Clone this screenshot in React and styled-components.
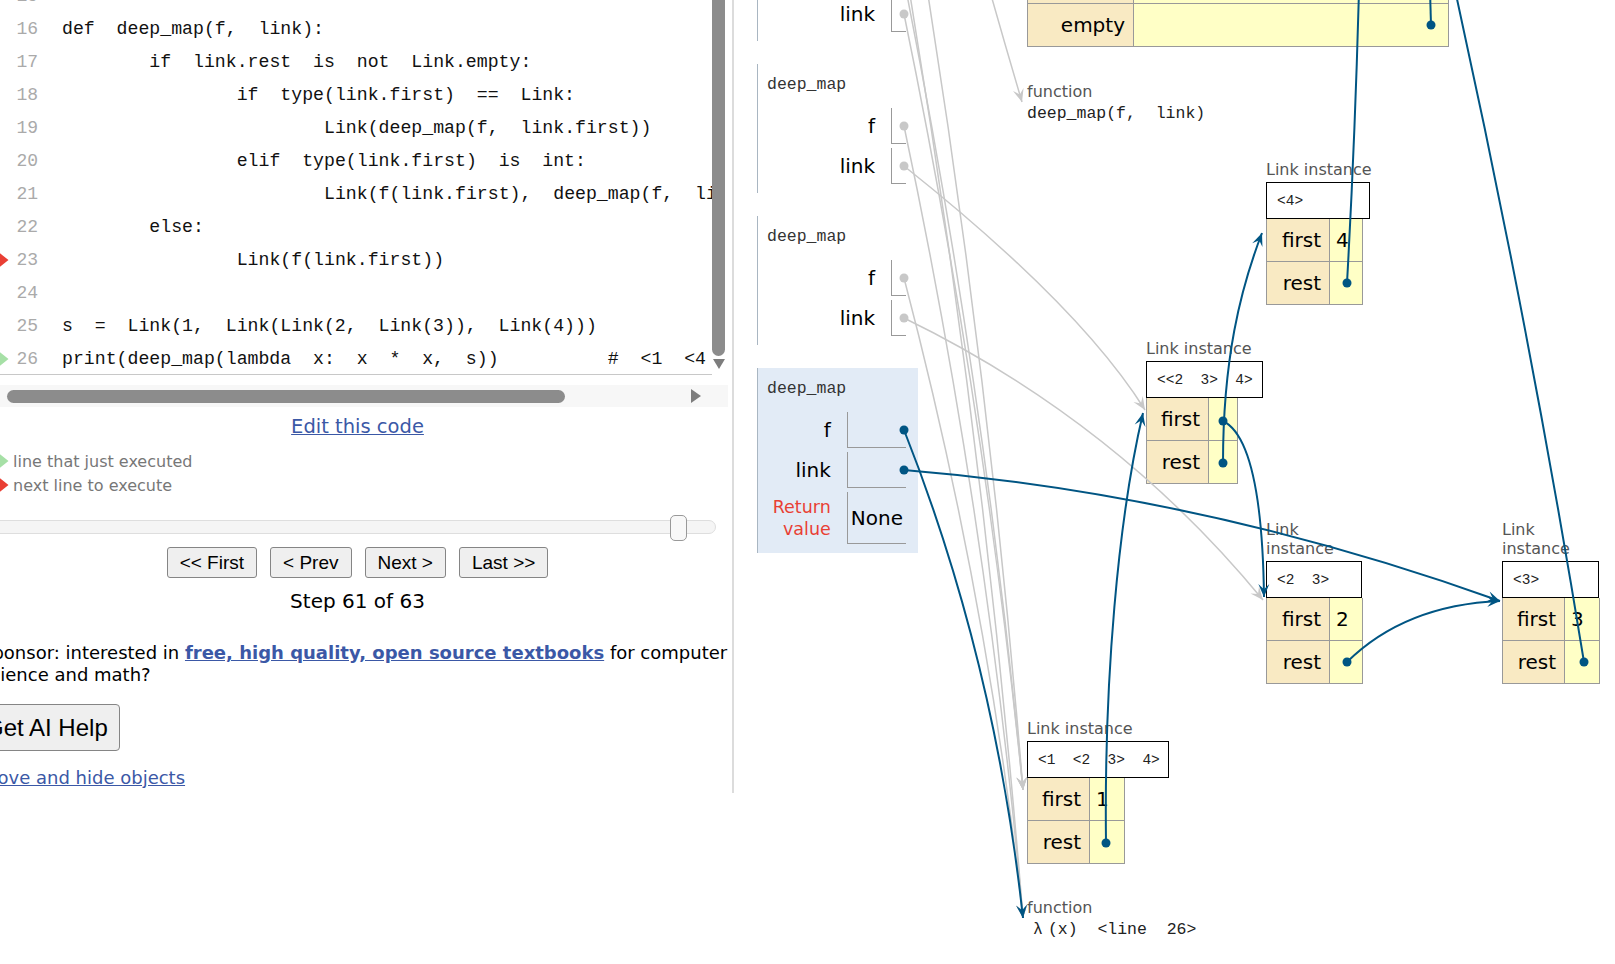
import React from "react";
import styled, { createGlobalStyle } from "styled-components";

const MONO = `"Liberation Mono", "DejaVu Sans Mono", monospace`;
const SANS = `"DejaVu Sans", Verdana, sans-serif`;
const ARIAL = `"Liberation Sans", Arial, sans-serif`;
const GRAY = "#c8c8c8";
const BLUE = "#005583";
const LINKBLUE = "#3b58a6";

const GlobalStyle = createGlobalStyle`
  html, body { margin: 0; padding: 0; background: #fff; }
  body { width: 1615px; height: 964px; overflow: hidden; font-family: ${SANS}; }
`;

const Page = styled.div`
  position: relative;
  display: flex;
  align-items: flex-start;
  width: 1615px;
  height: 964px;
  overflow: hidden;
`;

/* ---------- left pane ---------- */

const LeftPane = styled.div`
  flex: none;
  width: 749px;
  margin-left: -17px;
  padding-bottom: 3px;
  border-right: 2px solid #dcdcdc;
`;

const CodeRow = styled.div`
  display: flex;
  height: 396px;
  margin-top: -21px;
`;

const CodeScroll = styled.div`
  width: 729px;
  flex: none;
  overflow: hidden;
  box-sizing: border-box;
  border-bottom: 1px solid #c8c8c8;
`;

const CodeLine = styled.div`
  display: flex;
  align-items: center;
  height: 33px;
`;

const Gutter = styled.div`
  width: 26px;
  flex: none;
  display: flex;
  align-items: center;
`;

const LineNo = styled.div`
  width: 31px;
  flex: none;
  text-align: right;
  padding-right: 2px;
  box-sizing: border-box;
  font: 18px ${MONO};
  color: #aaa;
`;

const CodeText = styled.div`
  padding-left: 22px;
  font: 18.2px ${MONO};
  word-spacing: 0.6em;
  white-space: pre;
  color: #111;
`;

const VScroll = styled.div`
  width: 13px;
  flex: none;
  display: flex;
  flex-direction: column;
  align-items: center;
`;

const VThumb = styled.div`
  width: 13px;
  height: 377px;
  border-radius: 0 0 7px 7px;
  background: #8c8c8c;
`;

const DownArrow = styled.div`
  margin-top: 3px;
  width: 0;
  height: 0;
  border-left: 6px solid transparent;
  border-right: 6px solid transparent;
  border-top: 10px solid #7d7d7d;
`;

const HScroll = styled.div`
  margin-top: 10px;
  width: 745px;
  height: 22px;
  background: #f7f7f7;
  display: flex;
  align-items: center;
`;

const HThumb = styled.div`
  margin-left: 24px;
  width: 558px;
  height: 13px;
  border-radius: 7px;
  background: #8c8c8c;
`;

const RightArrow = styled.div`
  margin-left: auto;
  margin-right: 27px;
  width: 0;
  height: 0;
  border-top: 7px solid transparent;
  border-bottom: 7px solid transparent;
  border-left: 10px solid #7d7d7d;
`;

const Centered = styled.div`
  text-align: center;
  margin-top: ${(p) => p.$mt}px;
`;

const EditLink = styled.a`
  font: 19.5px/24px ${SANS};
  color: ${LINKBLUE};
  text-decoration: underline;
`;

const Legend = styled.div`
  margin-top: 10px;
`;

const LegendRow = styled.div`
  display: flex;
  align-items: center;
  height: 24px;
  font: 16px ${SANS};
  color: #777;
  gap: 4px;
`;

const SliderWrap = styled.div`
  position: relative;
  margin-top: 18px;
  height: 26px;
`;

const SliderTrack = styled.div`
  position: absolute;
  left: 0;
  top: 5px;
  width: 733px;
  height: 14px;
  box-sizing: border-box;
  border: 1px solid #dedede;
  border-radius: 7px;
  background: #f5f5f5;
`;

const SliderThumb = styled.div`
  position: absolute;
  top: 0;
  width: 17px;
  height: 26px;
  box-sizing: border-box;
  border: 1px solid #999;
  border-radius: 5px;
  background: #f8f8f8;
`;

const NavRow = styled.div`
  margin-top: 6px;
  display: flex;
  justify-content: center;
  gap: 13px;
`;

const NavButton = styled.button`
  height: 31px;
  padding: 0 12px;
  font: 19px ${ARIAL};
  color: #000;
  background: #efefef;
  border: 1px solid #858585;
  border-radius: 3px;
`;

const StepText = styled.div`
  margin-top: 10px;
  text-align: center;
  font: 20px/26px ${SANS};
  color: #000;
`;

const Sponsor = styled.p`
  margin: 28px 0 0 -2px;
  width: 790px;
  font: 18px/22px ${SANS};
  color: #000;

  a {
    color: ${LINKBLUE};
    font-weight: bold;
    text-decoration: underline;
  }
`;

const HelpButton = styled.button`
  display: block;
  margin: 18px 0 0 -10px;
  height: 47px;
  padding: 0 11px;
  font: 24px ${ARIAL};
  color: #000;
  background: #efefef;
  border: 1px solid #858585;
  border-radius: 4px;
`;

const MoveLink = styled.a`
  display: block;
  margin: 15px 0 0 -1px;
  font: 18px/24px ${SANS};
  color: ${LINKBLUE};
  text-decoration: underline;
`;

const Arrow = ({ color, w = 26, h = 20 }) => (
  <svg width={w} height={h} viewBox="0 0 26 20">
    <polygon points="0,7 14,7 14,1 25.5,10 14,19 14,13 0,13" fill={color} />
  </svg>
);

const code = [
  [15, ""],
  [16, "def deep_map(f, link):"],
  [17, "    if link.rest is not Link.empty:"],
  [18, "        if type(link.first) == Link:"],
  [19, "            Link(deep_map(f, link.first))"],
  [20, "        elif type(link.first) is int:"],
  [21, "            Link(f(link.first), deep_map(f, link.rest))"],
  [22, "    else:"],
  [23, "        Link(f(link.first))"],
  [24, ""],
  [25, "s = Link(1, Link(Link(2, Link(3)), Link(4)))"],
  [26, "print(deep_map(lambda x: x * x, s))     # <1 <4 <9> 16>>"],
];

const marks = { 23: "#e93f34", 26: "#a6e0a6" };

/* ---------- right pane ---------- */

const RightPane = styled.div`
  position: relative;
  flex: 1;
  height: 964px;
`;

const FrameColumn = styled.div`
  margin-top: -88px;
  padding-left: 23px;
  display: flex;
  flex-direction: column;
  gap: 23px;
`;

const Frame = styled.div`
  width: 161px;
  box-sizing: border-box;
  padding: 8px 12px 9px 9px;
  border-left: 1px solid #a9b6c2;
  background: ${(p) => (p.$active ? "#e2ebf6" : "transparent")};
`;

const FrameName = styled.div`
  font: 16.5px/26px ${MONO};
  color: #333;
  margin-bottom: 10px;
`;

const VarGrid = styled.div`
  display: grid;
  grid-template-columns: 1fr auto;
  row-gap: 4px;
`;

const VarName = styled.div`
  text-align: right;
  padding-right: 16px;
  font: 20px/36px ${SANS};
  color: #000;
`;

const RetName = styled.div`
  text-align: right;
  padding: 4px 16px 4px 0;
  font: 17.5px/22px ${SANS};
  color: #e93f34;
`;

const VarVal = styled.div`
  min-width: 15px;
  box-sizing: border-box;
  border-left: 1px solid #999;
  border-bottom: 1px solid #999;
  padding: 0 3px;
  font: 20px ${SANS};
  color: #000;
  display: flex;
  align-items: center;
`;

const HeapObj = styled.div`
  position: absolute;
  left: ${(p) => p.$x}px;
  top: ${(p) => p.$y}px;
`;

const TypeLabel = styled.div`
  width: ${(p) => p.$w}px;
  font: 16px/19px ${SANS};
  color: #555;
  margin-bottom: 3px;
  white-space: ${(p) => (p.$wrap ? "normal" : "nowrap")};
`;

const Header = styled.div`
  width: ${(p) => p.$w}px;
  height: 37px;
  box-sizing: border-box;
  border: 1px solid #000;
  background: #fff;
  display: flex;
  align-items: center;
  padding-left: 10px;
  font: 14.5px ${MONO};
  word-spacing: 0.6em;
  white-space: pre;
  color: #222;
`;

const Fields = styled.div`
  display: grid;
  grid-template-columns: ${(p) => p.$lab}px ${(p) => p.$val}px;
  grid-auto-rows: 43px;
  border-left: 1px solid #999;
`;

const FieldName = styled.div`
  box-sizing: border-box;
  border-right: 1px solid #999;
  border-bottom: 1px solid #999;
  background: #f9eac3;
  display: flex;
  align-items: center;
  justify-content: flex-end;
  padding-right: 8px;
  font: 20px ${SANS};
  color: #000;
`;

const FieldVal = styled.div`
  box-sizing: border-box;
  border-right: 1px solid #999;
  border-bottom: 1px solid #999;
  background: #ffffc6;
  display: flex;
  align-items: center;
  padding-left: 6px;
  font: 20px ${SANS};
  color: #000;
`;

const FuncKind = styled.div`
  font: 16px/19px ${SANS};
  color: #555;
`;

const FuncSig = styled.div`
  font: 16.5px/26px ${MONO};
  word-spacing: 0.6em;
  white-space: pre;
  color: #222;
  padding-left: ${(p) => p.$indent || 0}px;
`;

const Lambda = styled.span`
  margin-right: 5px;
`;

const Overlay = styled.svg`
  position: absolute;
  left: 0;
  top: 0;
  width: 1615px;
  height: 964px;
  pointer-events: none;
  overflow: visible;
`;

const frames = [
  { rows: ["f", "link"] },
  { rows: ["f", "link"] },
  { rows: ["f", "link"] },
  { rows: ["f", "link"], active: true, ret: "None" },
];

const links = [
  { x: 532, y: 160, repr: "<4>", head: 104, lab: 63, val: 33, first: "4" },
  { x: 412, y: 339, repr: "<<2 3> 4>", head: 117, lab: 62, val: 29, first: "" },
  { x: 532, y: 520, repr: "<2 3>", head: 96, lab: 63, val: 33, first: "2", wrap: true },
  { x: 768, y: 520, repr: "<3>", head: 97, lab: 62, val: 35, first: "3", wrap: true },
  { x: 293, y: 719, repr: "<1 <2 3> 4>", head: 142, lab: 62, val: 35, first: "1" },
];

const quad = (p0, c, p2, color) => ({
  d: `M${p0[0]},${p0[1]} Q${c[0]},${c[1]} ${p2[0]},${p2[1]}`,
  tip: p2,
  from: c,
  color,
});
const cubic = (p0, c1, c2, p3, color) => ({
  d: `M${p0[0]},${p0[1]} C${c1[0]},${c1[1]} ${c2[0]},${c2[1]} ${p3[0]},${p3[1]}`,
  tip: p3,
  from: c2,
  color,
});

const edges = [
  quad([991, -5], [1006, 48], [1022, 102], GRAY),
  quad([907, -5], [985, 392], [1023, 790], GRAY),
  quad([928, -5], [991, 392], [1023, 790], GRAY),
  quad([904, 14], [984, 402], [1023, 790], GRAY),
  quad([910, -5], [986, 456], [1023, 918], GRAY),
  quad([904, 126], [988, 522], [1023, 918], GRAY),
  quad([904, 278], [988, 598], [1023, 918], GRAY),
  quad([904, 166], [1080, 306], [1145, 410], GRAY),
  quad([904, 318], [1116, 421], [1263, 600], GRAY),
  quad([904, 430], [995, 660], [1023, 918], BLUE),
  quad([904, 470], [1202, 494], [1500, 601], BLUE),
  quad([1347, 662], [1405, 605], [1500, 601], BLUE),
  cubic([1106, 843], [1104, 680], [1118, 520], [1143, 413], BLUE),
  quad([1223, 421], [1262, 440], [1264, 597], BLUE),
  cubic([1223, 463], [1223, 360], [1240, 290], [1262, 233], BLUE),
  { d: "M1347,283 Q1355,140 1359,-10", color: BLUE },
  { d: "M1584,662 Q1530,330 1455,-10", color: BLUE },
  { d: "M1431,25 L1430,-10", color: BLUE },
];

const grayDots = [[904, 14], [904, 126], [904, 166], [904, 278], [904, 318]];
const blueDots = [
  [904, 430], [904, 470], [1347, 283], [1223, 421], [1223, 463],
  [1347, 662], [1584, 662], [1106, 843], [1431, 25],
];

const headPoints = ([tx, ty], [fx, fy]) => {
  const len = Math.hypot(tx - fx, ty - fy);
  const ux = (tx - fx) / len;
  const uy = (ty - fy) / len;
  const nx = -uy;
  const ny = ux;
  const L = 13;
  const H = 5.5;
  const bx = tx - ux * L;
  const by = ty - uy * L;
  return `${tx},${ty} ${bx + nx * H},${by + ny * H} ${tx - ux * L * 0.6},${ty - uy * L * 0.6} ${bx - nx * H},${by - ny * H}`;
};

const step = 61;
const totalSteps = 63;

const App = () => {
  return (
    <Page>
      <GlobalStyle />
      <LeftPane>
        <CodeRow>
          <CodeScroll>
            {code.map(([n, text]) => (
              <CodeLine key={n}>
                <Gutter>{marks[n] && <Arrow color={marks[n]} />}</Gutter>
                <LineNo>{n}</LineNo>
                <CodeText>{text}</CodeText>
              </CodeLine>
            ))}
          </CodeScroll>
          <VScroll>
            <VThumb />
            <DownArrow />
          </VScroll>
        </CodeRow>
        <HScroll>
          <HThumb />
          <RightArrow />
        </HScroll>
        <Centered $mt={8}>
          <EditLink href="#">Edit this code</EditLink>
        </Centered>
        <Legend>
          <LegendRow>
            <Arrow color="#a6e0a6" />
            line that just executed
          </LegendRow>
          <LegendRow>
            <Arrow color="#e93f34" />
            next line to execute
          </LegendRow>
        </Legend>
        <SliderWrap>
          <SliderTrack />
          <SliderThumb style={{ left: `${Math.round(((step - 1) / (totalSteps - 1)) * 710)}px` }} />
        </SliderWrap>
        <NavRow>
          <NavButton>&lt;&lt; First</NavButton>
          <NavButton>&lt; Prev</NavButton>
          <NavButton>Next &gt;</NavButton>
          <NavButton>Last &gt;&gt;</NavButton>
        </NavRow>
        <StepText>
          Step {step} of {totalSteps}
        </StepText>
        <Sponsor>
          Sponsor: interested in <a href="#">free, high quality, open source textbooks</a> for computer
          science and math?
        </Sponsor>
        <HelpButton>Get AI Help</HelpButton>
        <MoveLink href="#">Move and hide objects</MoveLink>
      </LeftPane>

      <RightPane>
        <FrameColumn>
          {frames.map((fr, i) => (
            <Frame key={i} $active={fr.active}>
              <FrameName>deep_map</FrameName>
              <VarGrid>
                {fr.rows.map((name) => (
                  <React.Fragment key={name}>
                    <VarName>{name}</VarName>
                    <VarVal />
                  </React.Fragment>
                ))}
                {fr.ret && (
                  <>
                    <RetName>
                      Return
                      <br />
                      value
                    </RetName>
                    <VarVal>{fr.ret}</VarVal>
                  </>
                )}
              </VarGrid>
            </Frame>
          ))}
        </FrameColumn>

        <HeapObj $x={293} $y={-39}>
          <Fields $lab={106} $val={315}>
            <FieldName />
            <FieldVal />
            <FieldName>empty</FieldName>
            <FieldVal />
          </Fields>
        </HeapObj>

        <HeapObj $x={293} $y={82}>
          <FuncKind>function</FuncKind>
          <FuncSig>deep_map(f, link)</FuncSig>
        </HeapObj>

        {links.map((o) => (
          <HeapObj key={o.repr} $x={o.x} $y={o.y}>
            <TypeLabel $w={o.head} $wrap={o.wrap}>
              Link instance
            </TypeLabel>
            <Header $w={o.head}>{o.repr}</Header>
            <Fields $lab={o.lab} $val={o.val}>
              <FieldName>first</FieldName>
              <FieldVal>{o.first}</FieldVal>
              <FieldName>rest</FieldName>
              <FieldVal />
            </Fields>
          </HeapObj>
        ))}

        <HeapObj $x={293} $y={898}>
          <FuncKind>function</FuncKind>
          <FuncSig $indent={6}>
            <Lambda>λ</Lambda>(x) &lt;line 26&gt;
          </FuncSig>
        </HeapObj>
      </RightPane>

      <Overlay viewBox="0 0 1615 964">
        {edges.map((e, i) => (
          <g key={i}>
            <path d={e.d} fill="none" stroke={e.color} strokeWidth={e.color === BLUE ? 2 : 1.5} />
            {e.tip && <polygon points={headPoints(e.tip, e.from)} fill={e.color} />}
          </g>
        ))}
        {grayDots.map(([x, y], i) => (
          <circle key={`g${i}`} cx={x} cy={y} r={4.5} fill={GRAY} />
        ))}
        {blueDots.map(([x, y], i) => (
          <circle key={`b${i}`} cx={x} cy={y} r={4.5} fill={BLUE} />
        ))}
      </Overlay>
    </Page>
  );
};

export default App;
